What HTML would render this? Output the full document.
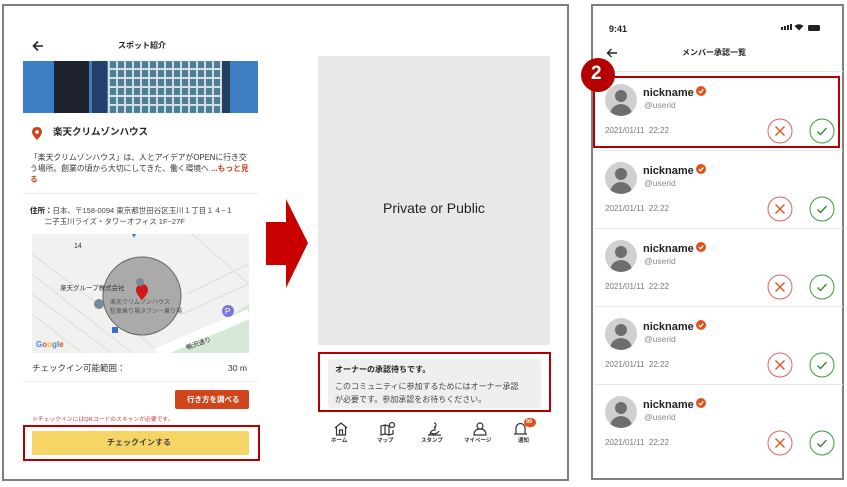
<!DOCTYPE html>
<html><head><meta charset="utf-8"><style>
*{margin:0;padding:0;box-sizing:border-box}
body{width:847px;height:487px;background:#fff;position:relative;overflow:hidden;font-family:"Liberation Sans","Noto Sans CJK JP",sans-serif;color:#222}
.a{position:absolute}
.t{position:absolute;white-space:nowrap;line-height:1}
.frame{position:absolute;border:2px solid #7f7f7f}
.av{position:absolute;width:32px;height:32px;border-radius:50%;background:#d0d0d0;overflow:hidden}
.av:before{content:"";position:absolute;left:10px;top:6px;width:12px;height:12px;border-radius:50%;background:#6e6e6e}
.av:after{content:"";position:absolute;left:5px;top:20px;width:22px;height:16px;border-radius:11px 11px 0 0;background:#6e6e6e}
.vb{display:inline-block;width:10px;height:10px;vertical-align:0px;margin-left:2px}
</style></head><body>

<div class="frame" style="left:2px;top:4px;width:567px;height:477px"></div>
<div class="frame" style="left:591px;top:4px;width:253px;height:476px"></div>

<svg width="0" height="0" style="position:absolute">
<defs>
<g id="xb"><circle cx="13" cy="13" r="12" fill="#fff" stroke="#e36060" stroke-width="1"/><path d="M8.5 8.5L17.5 17.5M17.5 8.5L8.5 17.5" stroke="#e0521b" stroke-width="1.4"/></g>
<g id="cb"><circle cx="13" cy="13" r="12" fill="#fff" stroke="#3c9a3c" stroke-width="1"/><path d="M8.5 13.5L11.5 16.5 17.5 10" stroke="#2a8a2a" stroke-width="1.3" fill="none"/></g>
<g id="vb"><circle cx="5" cy="5" r="5" fill="#e0521b"/><path d="M2.8 5.2L4.4 6.8 7.3 3.6" stroke="#fff" stroke-width="1.3" fill="none"/></g>
</defs></svg>

<!-- Left phone -->
<svg class="a" style="left:32px;top:40px" width="12" height="12" viewBox="0 0 12 12"><path d="M11 6H2M6 1.5L1.5 6 6 10.5" stroke="#222" stroke-width="1.6" fill="none"/></svg>
<div class="t" style="left:118px;top:42px;font-size:8px;font-weight:bold">スポット紹介</div>
<div class="a" style="left:23px;top:61px;width:235px;height:52px;background:#3d7fc4"></div>
<div class="a" style="left:54px;top:61px;width:35px;height:52px;background:#1c232c"></div>
<div class="a" style="left:92px;top:61px;width:15px;height:52px;background:#22406a"></div>
<div class="a" style="left:108px;top:61px;width:114px;height:52px;background:repeating-linear-gradient(90deg,#cfd9df 0 2px,#4d7f96 2px 8px),#4d7f96"></div>
<div class="a" style="left:108px;top:61px;width:114px;height:52px;background:repeating-linear-gradient(180deg,transparent 0 7px,#d8e0e4 7px 9px)"></div>
<div class="a" style="left:222px;top:61px;width:8px;height:52px;background:#23415f"></div>
<svg class="a" style="left:32px;top:127px" width="10" height="13" viewBox="0 0 10 13"><path d="M5 0C2 0 0 2 0 5c0 3 5 8 5 8s5-5 5-8c0-3-2-5-5-5z" fill="#d1451d"/><circle cx="5" cy="5" r="1.8" fill="#fff"/></svg>
<div class="t" style="left:53px;top:128px;font-size:9.5px;font-weight:bold">楽天クリムゾンハウス</div>
<div class="t" style="left:30px;top:152px;font-size:7.8px;line-height:11px;color:#333">「楽天クリムゾンハウス」は、人とアイデアがOPENに行き交<br>う場所。創業の頃から大切にしてきた、働く環境へ <b style="color:#c0461f">...もっと見</b><br><b style="color:#c0461f">る</b></div>
<div class="a" style="left:23px;top:193px;width:235px;height:1px;background:#e8e8e8"></div>
<div class="t" style="left:30px;top:205px;font-size:7.5px;line-height:11px;color:#444"><b style="color:#222">住所：</b>日本、〒158-0094 東京都世田谷区玉川１丁目１４−１<br>&nbsp;&nbsp;&nbsp;&nbsp;&nbsp;&nbsp;&nbsp;二子玉川ライズ・タワーオフィス 1F~27F</div>
<!-- map -->
<div class="a" style="left:32px;top:234px;width:217px;height:119px;background:#f1f1ef;overflow:hidden">
<svg width="217" height="119" viewBox="0 0 217 119">
<g stroke="#dcdcdc" stroke-width="1" fill="none"><path d="M0 40L100 119M0 60L80 119M0 80L50 119M0 20L130 119M160 0L217 50"/><path d="M155 60L217 30M150 80L217 50"/></g>
<path d="M140 119L217 70V119z" fill="#d6e9d8"/>
<path d="M125 119L217 80" stroke="#fff" stroke-width="10"/>
<circle cx="110" cy="62" r="39" fill="#aaa" stroke="#666" stroke-width="1"/>
<path d="M110 50c-4 0-6 3-6 6 0 4 6 10 6 10s6-6 6-10c0-3-2-6-6-6z" fill="#d21818"/>
<circle cx="108" cy="48" r="4" fill="#7b8a94"/><circle cx="67" cy="70" r="5" fill="#7b8a94"/>
<circle cx="196" cy="77" r="6" fill="#7b77d8"/><text x="193" y="80" font-size="8" fill="#fff" font-family="Liberation Sans">P</text>
<rect x="80" y="93" width="6" height="6" fill="#3a6fd0"/>
<path d="M100 0l2 4 2-4z" fill="#4c7ad0"/>
<text x="42" y="14" font-size="7" fill="#333" font-family="Liberation Sans">14</text>
<text x="28" y="56" font-size="6.5" fill="#333" font-family="Noto Sans CJK JP">楽天グループ株式会社</text>
<text x="78" y="70" font-size="6" fill="#555" font-family="Noto Sans CJK JP">楽天クリムゾンハウス</text>
<text x="78" y="79" font-size="6" fill="#555" font-family="Noto Sans CJK JP">駐車乗り場タクシー乗り場</text>
<text x="155" y="116" font-size="6.5" fill="#333" font-family="Noto Sans CJK JP" transform="rotate(-20 155 116)">鴨沢通り</text>
<text x="4" y="113" font-size="8" font-family="Liberation Sans" font-weight="bold"><tspan fill="#4285f4">G</tspan><tspan fill="#ea4335">o</tspan><tspan fill="#fbbc05">o</tspan><tspan fill="#4285f4">g</tspan><tspan fill="#34a853">l</tspan><tspan fill="#ea4335">e</tspan></text>
</svg></div>
<div class="t" style="left:32px;top:364px;font-size:8.5px;color:#333">チェックイン可能範囲：</div>
<div class="t" style="left:228px;top:364px;font-size:8.5px;color:#333">30 m</div>
<div class="a" style="left:23px;top:381px;width:235px;height:1px;background:#eee"></div>
<div class="a" style="left:175px;top:390px;width:74px;height:19px;background:#d0451b;border-radius:2px"></div>
<div class="t" style="left:187px;top:396px;font-size:7.5px;color:#fff;font-weight:bold">行き方を調べる</div>
<div class="t" style="left:32px;top:418px;font-size:5.8px;color:#d04040">※チェックインにはQRコードのスキャンが必要です。</div>
<div class="a" style="left:23px;top:425px;width:237px;height:36px;border:2.5px solid #b40000"></div>
<div class="a" style="left:32px;top:431px;width:217px;height:24px;background:#f7d564;border-radius:2px"></div>
<div class="t" style="left:107px;top:439px;font-size:8px;color:#444;font-weight:bold">チェックインする</div>

<!-- arrow -->
<svg class="a" style="left:265px;top:198px" width="44" height="92" viewBox="0 0 44 92"><path d="M1 24H21V1L43 45 21 90V67H1z" fill="#c80000"/></svg>

<!-- middle screen -->
<div class="a" style="left:318px;top:56px;width:232px;height:289px;background:#e8e8e8"></div>
<div class="t" style="left:383px;top:201px;font-size:14px;color:#222">Private or Public</div>
<div class="a" style="left:318px;top:352px;width:233px;height:60px;border:2.5px solid #b40000"></div>
<div class="a" style="left:328px;top:359px;width:213px;height:49px;background:#efefef;border-radius:3px"></div>
<div class="t" style="left:335px;top:366px;font-size:8px;font-weight:bold">オーナーの承認待ちです。</div>
<div class="t" style="left:335px;top:380px;font-size:8px;line-height:13px;color:#444">このコミュニティに参加するためにはオーナー承認<br>が必要です。参加承認をお待ちください。</div>
<svg class="a" style="left:334px;top:421px" width="200" height="16" viewBox="0 0 200 16" fill="none" stroke="#333" stroke-width="1.2">
<path d="M1 7L7 2 13 7M2.5 6V14H11.5V6M5.5 14V9H8.5V14"/>
<path d="M47 5V14L51 13V4zM51 4L55 5M55 14L51 13M55 5V14L59 13V9"/><circle cx="58" cy="4" r="2.5"/>
<path d="M94 14H107M96 14C96 10 99 9 101 9V5M100 2A2 2 0 1 1 100 6"/><path d="M97 12c3 2 7 0 8-2"/>
<circle cx="146" cy="5" r="3"/><path d="M140 14C140 9 143 8 146 8S152 9 152 14z"/>
<path d="M180 13H193M182 13V7A4.5 4.5 0 0 1 191 7V13M186 2V3"/>
</svg>
<div class="a" style="left:524px;top:418px;width:12px;height:9px;border-radius:5px;background:#e0521b"></div>
<div class="t" style="left:526px;top:420px;font-size:5.5px;color:#fff;font-weight:bold">99</div>
<div class="t" style="left:331px;top:439px;font-size:5.5px;color:#333;font-weight:bold">ホーム</div>
<div class="t" style="left:377px;top:439px;font-size:5.5px;color:#333;font-weight:bold">マップ</div>
<div class="t" style="left:421px;top:439px;font-size:5.5px;color:#333;font-weight:bold">スタンプ</div>
<div class="t" style="left:464px;top:439px;font-size:5.5px;color:#333;font-weight:bold">マイページ</div>
<div class="t" style="left:518px;top:439px;font-size:5.5px;color:#333;font-weight:bold">通知</div>

<!-- right phone -->
<div class="t" style="left:609px;top:25px;font-size:9px;font-weight:bold">9:41</div>
<div class="a" style="left:781px;top:27px;width:2px;height:3px;background:#222"></div>
<div class="a" style="left:784px;top:26px;width:2px;height:4px;background:#222"></div>
<div class="a" style="left:787px;top:25px;width:2px;height:5px;background:#222"></div>
<div class="a" style="left:790px;top:24px;width:2px;height:6px;background:#222"></div>
<svg class="a" style="left:794px;top:23px" width="10" height="8" viewBox="0 0 10 8"><path d="M5 7.5L0.5 3A6.5 6.5 0 0 1 9.5 3z" fill="#222"/></svg>
<div class="a" style="left:808px;top:25px;width:12px;height:6px;background:#222;border-radius:1.5px"></div>
<svg class="a" style="left:606px;top:48px" width="12" height="10" viewBox="0 0 12 10"><path d="M11 5H2M5.5 1L1.5 5 5.5 9" stroke="#222" stroke-width="1.4" fill="none"/></svg>
<div class="t" style="left:682px;top:49px;font-size:8px;font-weight:bold">メンバー承認一覧</div>
<div class="a" style="left:594px;top:71px;width:249px;height:1px;background:#e6e6e6"></div>

<div class="a" style="left:593px;top:76px;width:247px;height:72px;border:2.5px solid #b40000"></div>
<div class="a" style="left:581px;top:58px;width:34px;height:34px;border-radius:50%;background:#b40000"></div>
<div class="t" style="left:591px;top:64px;font-size:19px;color:#fff;font-weight:bold">2</div>

<div class="av" style="left:605px;top:84px"></div><div class="t" style="left:643px;top:86px;font-size:11px;font-weight:bold">nickname<svg class="vb" viewBox="0 0 10 10"><use href="#vb"/></svg></div><div class="t" style="left:644px;top:101px;font-size:8.5px;color:#888">@userid</div><div class="t" style="left:605px;top:127px;font-size:8px;color:#777">2021/01/11&nbsp;&nbsp;22:22</div>
<svg class="a" style="left:767px;top:118px" width="26" height="26"><use href="#xb"/></svg><svg class="a" style="left:809px;top:118px" width="26" height="26"><use href="#cb"/></svg>
<div class="a" style="left:594px;top:150px;width:249px;height:1px;background:#e6e6e6"></div>

<div class="av" style="left:605px;top:162px"></div><div class="t" style="left:643px;top:164px;font-size:11px;font-weight:bold">nickname<svg class="vb" viewBox="0 0 10 10"><use href="#vb"/></svg></div><div class="t" style="left:644px;top:179px;font-size:8.5px;color:#888">@userid</div><div class="t" style="left:605px;top:205px;font-size:8px;color:#777">2021/01/11&nbsp;&nbsp;22:22</div>
<svg class="a" style="left:767px;top:196px" width="26" height="26"><use href="#xb"/></svg><svg class="a" style="left:809px;top:196px" width="26" height="26"><use href="#cb"/></svg>
<div class="a" style="left:594px;top:228px;width:249px;height:1px;background:#e6e6e6"></div>

<div class="av" style="left:605px;top:240px"></div><div class="t" style="left:643px;top:242px;font-size:11px;font-weight:bold">nickname<svg class="vb" viewBox="0 0 10 10"><use href="#vb"/></svg></div><div class="t" style="left:644px;top:257px;font-size:8.5px;color:#888">@userid</div><div class="t" style="left:605px;top:283px;font-size:8px;color:#777">2021/01/11&nbsp;&nbsp;22:22</div>
<svg class="a" style="left:767px;top:274px" width="26" height="26"><use href="#xb"/></svg><svg class="a" style="left:809px;top:274px" width="26" height="26"><use href="#cb"/></svg>
<div class="a" style="left:594px;top:306px;width:249px;height:1px;background:#e6e6e6"></div>

<div class="av" style="left:605px;top:318px"></div><div class="t" style="left:643px;top:320px;font-size:11px;font-weight:bold">nickname<svg class="vb" viewBox="0 0 10 10"><use href="#vb"/></svg></div><div class="t" style="left:644px;top:335px;font-size:8.5px;color:#888">@userid</div><div class="t" style="left:605px;top:361px;font-size:8px;color:#777">2021/01/11&nbsp;&nbsp;22:22</div>
<svg class="a" style="left:767px;top:352px" width="26" height="26"><use href="#xb"/></svg><svg class="a" style="left:809px;top:352px" width="26" height="26"><use href="#cb"/></svg>
<div class="a" style="left:594px;top:384px;width:249px;height:1px;background:#e6e6e6"></div>

<div class="av" style="left:605px;top:396px"></div><div class="t" style="left:643px;top:398px;font-size:11px;font-weight:bold">nickname<svg class="vb" viewBox="0 0 10 10"><use href="#vb"/></svg></div><div class="t" style="left:644px;top:413px;font-size:8.5px;color:#888">@userid</div><div class="t" style="left:605px;top:439px;font-size:8px;color:#777">2021/01/11&nbsp;&nbsp;22:22</div>
<svg class="a" style="left:767px;top:430px" width="26" height="26"><use href="#xb"/></svg><svg class="a" style="left:809px;top:430px" width="26" height="26"><use href="#cb"/></svg>

</body></html>
